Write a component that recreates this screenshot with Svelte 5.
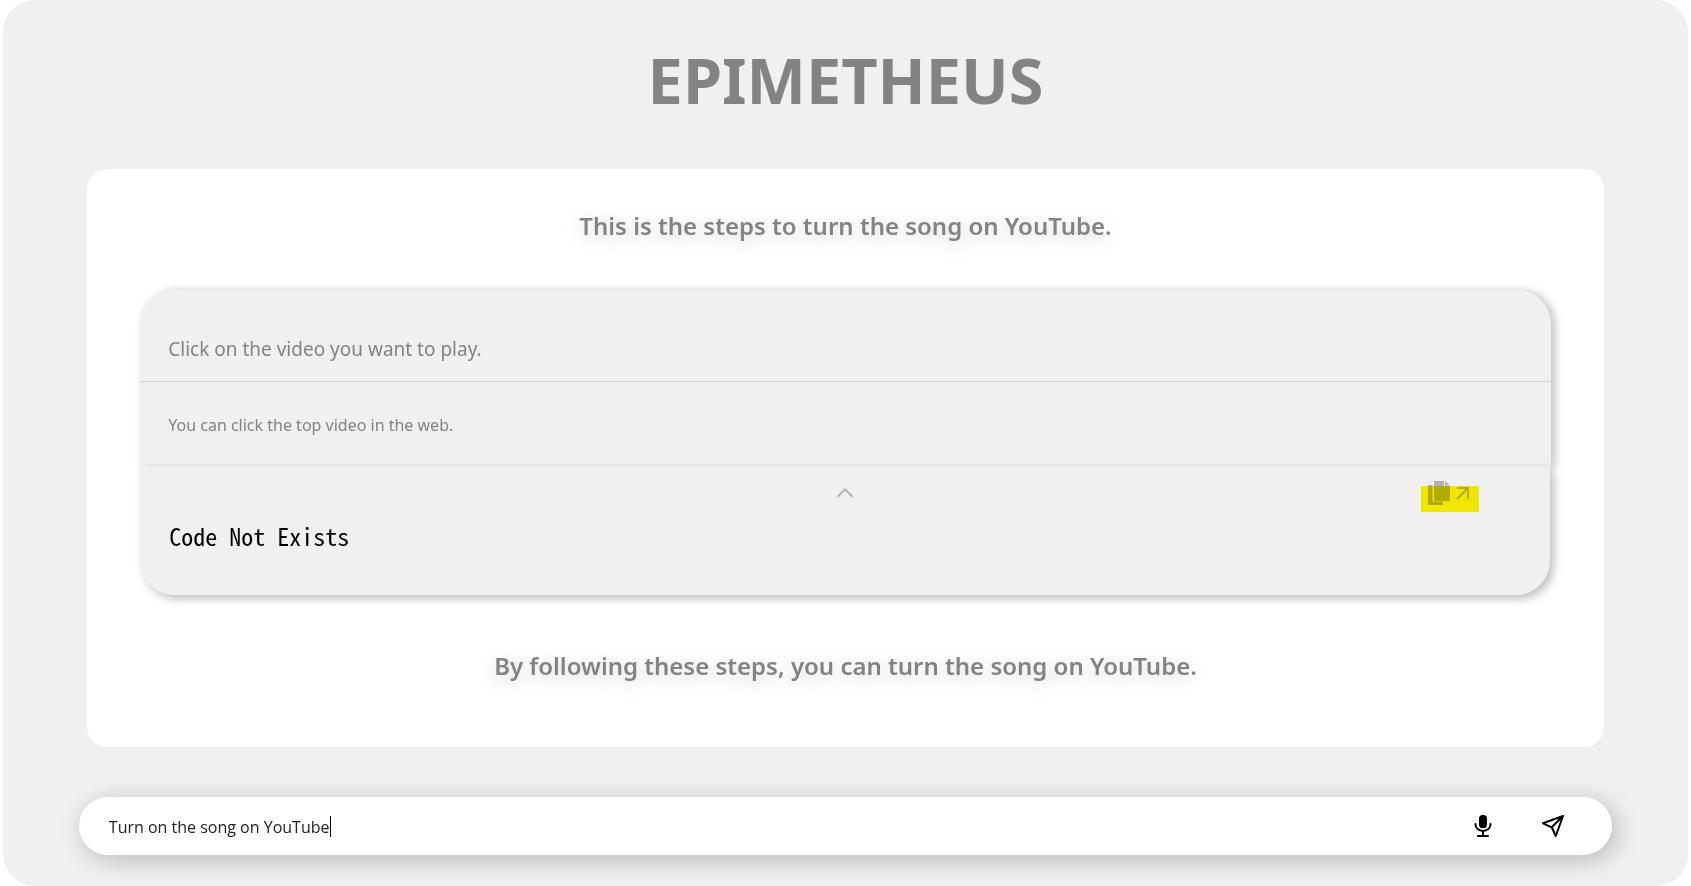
<script>
  let query = $state('Turn on the song on YouTube');
  let open = $state(true);
</script>

<main class="shell">
  <h1>EPIMETHEUS</h1>

  <section class="panel">
    <p class="lead">This is the steps to turn the song on YouTube.</p>

    <article class="step">
      <div class="info">
        <h2>Click on the video you want to play.</h2>
        <p>You can click the top video in the web.</p>
      </div>
      <div class="code">
        <div class="toolbar">
          <button class="toggle" type="button" aria-label="Toggle code" aria-expanded={open} onclick={() => (open = !open)}>
            <svg width="18" height="12" viewBox="0 0 18 12" fill="none" stroke="#b3b3b3" stroke-width="2"><path d="M1.5 9.8 9 2.3l7.500 7.500" /></svg>
          </button>
          <div class="actions">
            <button type="button" aria-label="Copy code">
              <svg width="22" height="24" viewBox="0 0 22 24" fill="#b3b3b3"><path d="M0 4h4.500v16.500H15V24H0zM6 0h10v5h6v15H6zM17 0l5 4.500h-5z" /></svg>
            </button>
            <button type="button" aria-label="Open in new window">
              <svg width="14" height="14" viewBox="0 0 14 14" fill="none" stroke="#b3b3b3" stroke-width="2"><path d="M1 2h11v11M12 2 1 13" /></svg>
            </button>
            <span class="marker"></span>
          </div>
        </div>
        {#if open}<pre>Code Not Exists</pre>{/if}
      </div>
    </article>

    <p class="lead">By following these steps, you can turn the song on YouTube.</p>
  </section>

  <form class="ask" onsubmit={(e) => e.preventDefault()}>
    <input type="text" aria-label="Ask a question" bind:value={query} />
    <span class="caret"></span>
    <button class="mic" type="button" aria-label="Speak">
      <svg width="24" height="24" viewBox="0 0 24 24" fill="none" stroke="#000" stroke-width="2" stroke-linecap="round"><rect x="8" y="1" width="8" height="13" rx="3.600" fill="#000" stroke="none" /><path d="M4.500 10v.5a7.500 6.500 0 0 0 15 0V10M12 17.500V22M7 22h10" /></svg>
    </button>
    <button type="submit" aria-label="Send">
      <svg width="24" height="24" viewBox="0 0 24 24" fill="none" stroke="#000" stroke-width="2" stroke-linejoin="round"><path d="M22 2 2 9.300l8.700 4L14.800 22zM22 2 10.700 13.300" /></svg>
    </button>
  </form>
</main>

<style>
  :global(body) {
    background: #fff;
  }
  .shell {
    box-sizing: border-box;
    min-height: 100vh;
    margin: 0 3px;
    padding: 30px 0 31px;
    border-radius: 32px;
    background: #f0f0f0;
    color: #838383;
    font-family: 'Noto Sans', 'Open Sans', sans-serif;
    display: flex;
    flex-direction: column;
    align-items: center;
  }
  h1 {
    margin: 0;
    font-size: 63px;
    line-height: 100px;
    font-weight: 700;
  }
  .panel {
    box-sizing: border-box;
    width: 90%;
    margin: 39px 0 50px;
    padding: 38px 53px 62px;
    border-radius: 20px;
    background: #fff;
  }
  .lead {
    margin: 0;
    text-align: center;
    font-family: 'Noto Sans', 'Open Sans', sans-serif;
    font-size: 24px;
    line-height: 38px;
    font-weight: 600;
    text-shadow: 0 4px 20px rgba(0, 0, 0, 0.22);
  }
  .step {
    margin: 45px 0 52px;
  }
  .info {
    border-radius: 34px 34px 0 0;
    background: #f0f0f0;
    box-shadow: 4px 1px 10px rgba(0, 0, 0, 0.25);
  }
  h2,
  .info p {
    margin: 0;
    padding: 0 28px;
    font-weight: 400;
  }
  h2 {
    padding-top: 44px;
    padding-bottom: 16px;
    border-bottom: 1px solid #d3d3d3;
    font-size: 19px;
    line-height: 31px;
  }
  .info p {
    padding-top: 30px;
    padding-bottom: 29px;
    font-size: 16px;
    line-height: 26px;
  }
  .code {
    margin-right: 1px;
    padding-bottom: 43px;
    border-radius: 0 0 34px 34px;
    background: #f0f0f0;
    box-shadow: 4px 4px 10px rgba(0, 0, 0, 0.25);
  }
  .toolbar {
    display: grid;
    grid-template-columns: 1fr auto 1fr;
    align-items: center;
    height: 52px;
  }
  button {
    display: grid;
    padding: 0;
    border: 0;
    background: none;
    cursor: pointer;
  }
  .toggle {
    grid-column: 2;
  }
  .actions {
    position: relative;
    justify-self: end;
    display: flex;
    align-items: center;
    gap: 6px;
    margin-right: 80px;
  }
  .marker {
    position: absolute;
    inset: 5px -9px -7px -7px;
    background: #fff500;
    mix-blend-mode: multiply;
    pointer-events: none;
  }
  pre {
    margin: 0;
    padding: 0 29px;
    color: #000;
    font-family: 'Noto Sans Mono CJK KR', 'Liberation Mono', monospace;
    font-size: 24px;
    line-height: 33px;
  }
  .ask {
    box-sizing: border-box;
    width: 91%;
    height: 58px;
    padding: 0 47px 0 30px;
    border-radius: 29px;
    background: #fff;
    box-shadow: 5px 5px 26px rgba(0, 0, 0, 0.23);
    display: flex;
    align-items: center;
  }
  input {
    field-sizing: content;
    padding: 2px 0 0;
    border: 0;
    outline: 0;
    background: none;
    color: #222;
    font-family: 'Open Sans', 'Noto Sans', sans-serif;
    font-size: 16px;
    line-height: 26px;
  }
  .caret {
    width: 1px;
    height: 21px;
    background: #000;
  }
  .mic {
    margin: 0 46px 0 auto;
  }
</style>
